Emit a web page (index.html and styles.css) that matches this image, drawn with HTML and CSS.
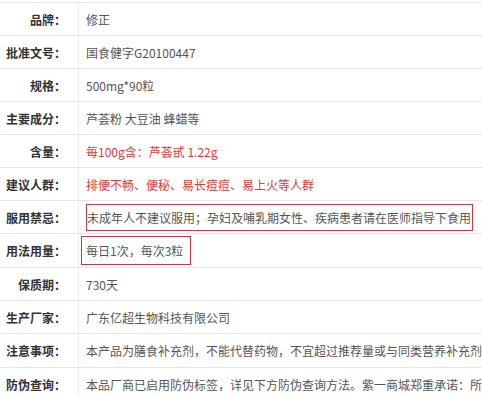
FILE: index.html
```html
<!DOCTYPE html>
<html lang="zh-CN">
<head>
<meta charset="utf-8">
<title>商品参数</title>
<link rel="stylesheet" href="styles.css">
</head>
<body>
<div class="params">
  <div class="row"><div class="label">品牌：</div><div class="value">修正</div></div>
  <div class="row"><div class="label">批准文号：</div><div class="value">国食健字G20100447</div></div>
  <div class="row"><div class="label">规格：</div><div class="value">500mg*90粒</div></div>
  <div class="row"><div class="label">主要成分：</div><div class="value">芦荟粉 大豆油 蜂蜡等</div></div>
  <div class="row"><div class="label">含量：</div><div class="value red">每100g含：芦荟甙 1.22g</div></div>
  <div class="row"><div class="label">建议人群：</div><div class="value red">排便不畅、便秘、易长痘痘、易上火等人群</div></div>
  <div class="row"><div class="label">服用禁忌：</div><div class="value"><span class="mark mark-wide">未成年人不建议服用；孕妇及哺乳期女性、疾病患者请在医师指导下食用</span></div></div>
  <div class="row tall"><div class="label">用法用量：</div><div class="value"><span class="mark mark-short">每日1次，每次3粒</span></div></div>
  <div class="row"><div class="label">保质期：</div><div class="value">730天</div></div>
  <div class="row"><div class="label">生产厂家：</div><div class="value">广东亿超生物科技有限公司</div></div>
  <div class="row tall"><div class="label">注意事项：</div><div class="value">本产品为膳食补充剂，不能代替药物，不宜超过推荐量或与同类营养补充剂</div></div>
  <div class="row"><div class="label">防伪查询：</div><div class="value">本品厂商已启用防伪标签，详见下方防伪查询方法。紫一商城郑重承诺：所</div></div>
</div>
</body>
</html>
```

FILE: styles.css
```css
html, body {
  margin: 0;
  padding: 0;
  background: #fff;
  overflow: hidden;
}

body {
  font-family: "Microsoft YaHei", "Noto Sans CJK SC", "Noto Sans", sans-serif;
  font-size: 12px;
  color: #555;
}

.params {
  margin-top: 2px;
  border-top: 1px solid #e6e6e6;
}

.row {
  display: flex;
  height: 32px;
  border-bottom: 1px solid #e6e6e6;
}

.row.tall {
  height: 33px;
}

.label {
  flex: 0 0 79px;
  box-sizing: border-box;
  padding-right: 12px;
  font-weight: bold;
  color: #333;
  border-right: 1px solid #ededed;
  display: flex;
  align-items: center;
  justify-content: flex-end;
  white-space: nowrap;
}

.value {
  flex: 1;
  min-width: 0;
  padding-left: 7px;
  display: flex;
  align-items: center;
  white-space: nowrap;
  overflow: hidden;
}

.red {
  color: #e4393c;
}

.mark {
  border: 1px solid #c33a4c;
  line-height: 16px;
}

.mark-wide {
  padding: 5px 1px 4px 0;
}

.mark-short {
  margin-left: -5px;
  padding: 6px 7px 5px 4px;
}
```
